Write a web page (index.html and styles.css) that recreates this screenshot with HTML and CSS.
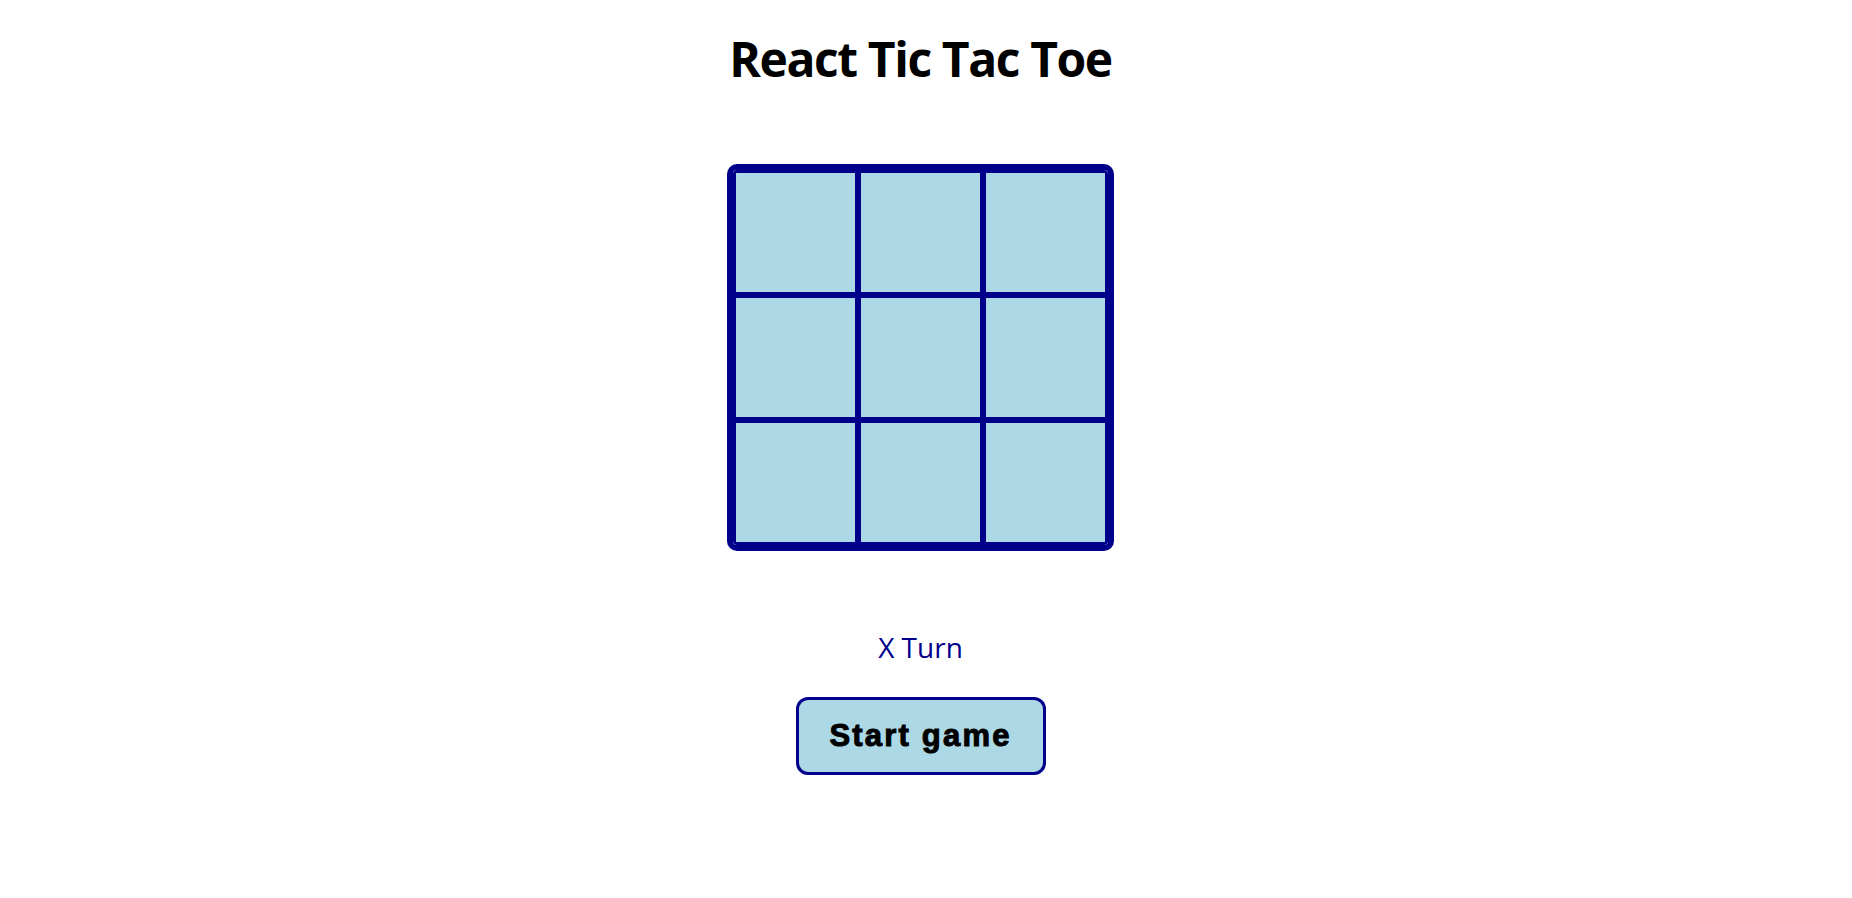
FILE: index.html
```html
<!DOCTYPE html>
<html lang="en">
<head>
<meta charset="utf-8">
<title>React Tic Tac Toe</title>
<link rel="stylesheet" href="styles.css">
</head>
<body>
<main class="app">
  <h1 class="title">React Tic Tac Toe</h1>
  <div class="board">
    <div class="cell"></div>
    <div class="cell"></div>
    <div class="cell"></div>
    <div class="cell"></div>
    <div class="cell"></div>
    <div class="cell"></div>
    <div class="cell"></div>
    <div class="cell"></div>
    <div class="cell"></div>
  </div>
  <p class="status">X Turn</p>
  <button class="start-btn" type="button">Start game</button>
</main>
</body>
</html>
```

FILE: styles.css
```css
html, body {
  margin: 0;
  padding: 0;
  background: #ffffff;
}

.app {
  display: flex;
  flex-direction: column;
  align-items: center;
  padding-right: 11px;
  font-family: "Open Sans", "Noto Sans", sans-serif;
}

.title {
  margin: 26px 0 0 0;
  font-size: 48px;
  line-height: 66px;
  font-weight: 700;
  color: #000;
  letter-spacing: -1.4px;
}

.board {
  margin-top: 72px;
  display: grid;
  grid-template-columns: repeat(3, 125px);
  grid-template-rows: repeat(3, 125px);
  border: 6px solid #00008b;
  border-radius: 10px;
  overflow: hidden;
}

.cell {
  box-sizing: border-box;
  width: 125px;
  height: 125px;
  border: 3px solid #00008b;
  background: #add8e6;
}

.status {
  margin: 77px 0 0 0;
  font-size: 28px;
  line-height: 38px;
  color: #00008b;
}

.start-btn {
  margin-top: 31px;
  box-sizing: border-box;
  width: 250px;
  height: 78px;
  border: 3px solid #00008b;
  border-radius: 12px;
  background: #add8e6;
  color: #000;
  font-family: "Liberation Sans", Arial, sans-serif;
  font-weight: 700;
  font-size: 31px;
  letter-spacing: 2.2px;
  -webkit-text-stroke: 1px #000;
  padding: 0;
  cursor: pointer;
}
```
